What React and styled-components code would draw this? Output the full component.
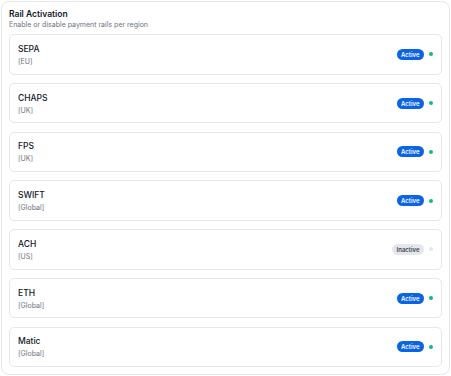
import React from "react";
import styled, { createGlobalStyle } from "styled-components";

const GlobalStyle = createGlobalStyle`
  html, body {
    margin: 0;
    background: #ffffff;
  }
  body {
    font-family: Inter, "Noto Sans", "Liberation Sans", sans-serif;
    -webkit-font-smoothing: antialiased;
  }
`;

const Card = styled.section`
  box-sizing: border-box;
  margin: 1px 1px 0 1px;
  width: 449px;
  height: 374px;
  border: 1px solid #e5e7eb;
  border-radius: 8px;
  padding: 6px 7px 6px 7px;
  display: flex;
  flex-direction: column;
`;

const Title = styled.h2`
  margin: 0;
  font-size: 8.5px;
  line-height: 12px;
  font-weight: 600;
  color: #111827;
`;

const Subtitle = styled.p`
  margin: 0 0 4px;
  font-size: 7px;
  line-height: 10px;
  color: #6b7280;
`;

const RailList = styled.div`
  display: flex;
  flex-direction: column;
  gap: 8.25px;
`;

const RailRow = styled.div`
  box-sizing: border-box;
  height: 40.5px;
  border: 1px solid #e5e7eb;
  border-radius: 5px;
  padding: 2px 8px 0 8px;
  display: flex;
  align-items: center;
  justify-content: space-between;
`;

const RailInfo = styled.div`
  display: flex;
  flex-direction: column;
  gap: 2px;
`;

const RailName = styled.span`
  font-size: 8.5px;
  line-height: 11px;
  font-weight: 500;
  color: #111827;
`;

const RailRegion = styled.span`
  font-size: 7px;
  line-height: 10px;
  color: #6b7280;
`;

const StatusGroup = styled.div`
  display: flex;
  align-items: center;
  gap: 5px;
  margin-top: -2px;
`;

const Badge = styled.span`
  display: inline-flex;
  align-items: center;
  justify-content: center;
  height: 11px;
  padding: 0 4.5px;
  border-radius: 6px;
  font-size: 6px;
  font-weight: 600;
  color: ${(p) => (p.$active ? "#ffffff" : "#374151")};
  background: ${(p) => (p.$active ? "#0b63e5" : "#e5e7eb")};
`;

const Dot = styled.span`
  width: 4px;
  height: 4px;
  border-radius: 50%;
  background: ${(p) => (p.$active ? "#10b981" : "#e5e7eb")};
`;

const rails = [
  { name: "SEPA", region: "EU", active: true },
  { name: "CHAPS", region: "UK", active: true },
  { name: "FPS", region: "UK", active: true },
  { name: "SWIFT", region: "Global", active: true },
  { name: "ACH", region: "US", active: false },
  { name: "ETH", region: "Global", active: true },
  { name: "Matic", region: "Global", active: true },
];

export default function App() {
  return (
    <>
      <GlobalStyle />
      <Card>
        <Title>Rail Activation</Title>
        <Subtitle>Enable or disable payment rails per region</Subtitle>
        <RailList>
          {rails.map((r) => (
            <RailRow key={r.name}>
              <RailInfo>
                <RailName>{r.name}</RailName>
                <RailRegion>[{r.region}]</RailRegion>
              </RailInfo>
              <StatusGroup>
                <Badge $active={r.active}>{r.active ? "Active" : "Inactive"}</Badge>
                <Dot $active={r.active} />
              </StatusGroup>
            </RailRow>
          ))}
        </RailList>
      </Card>
    </>
  );
}
